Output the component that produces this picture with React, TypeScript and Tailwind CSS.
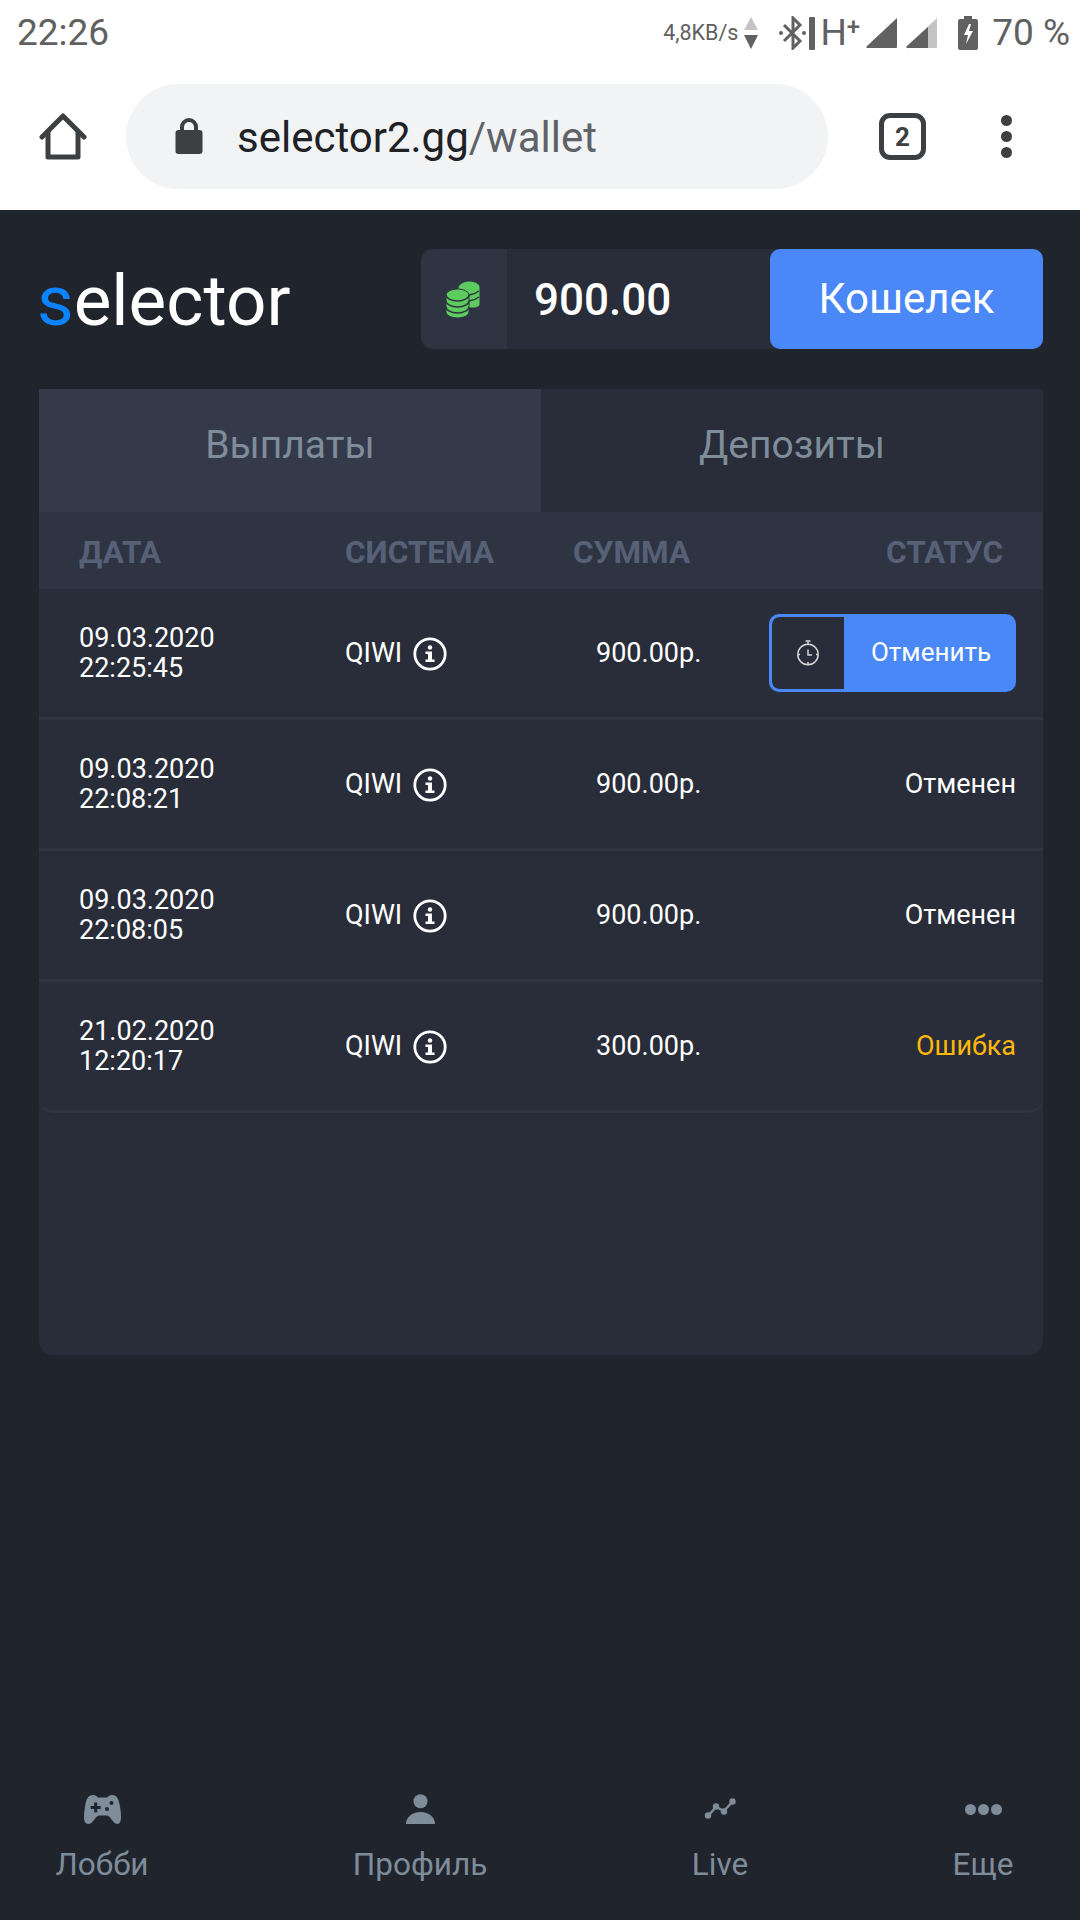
const payouts = [
  { date: "09.03.2020", time: "22:25:45", amount: "900.00р.", status: "pending" },
  { date: "09.03.2020", time: "22:08:21", amount: "900.00р.", status: "Отменен" },
  { date: "09.03.2020", time: "22:08:05", amount: "900.00р.", status: "Отменен" },
  { date: "21.02.2020", time: "12:20:17", amount: "300.00р.", status: "Ошибка" },
];

const StatusBar = () => (
  <div className="flex h-[62px] items-center justify-between pl-[17px] pr-[10px] pt-[3px] text-[#616161]">
    <span className="text-[37px] leading-none">22:26</span>
    <div className="flex items-center">
      <span className="text-[21.500px] leading-none">4,8KB/s</span>
      <svg width="14" height="32" viewBox="0 0 14 32" className="ml-[6px]">
        <path d="M7 0l7 13H0z" fill="#c4c4c4" />
        <path d="M7 32l7-14H0z" fill="#616161" />
      </svg>
      <svg width="36" height="34" viewBox="0 0 36 34" className="ml-[21px]" fill="none">
        <path d="M5 9l16 16-7 7V2l7 7L5 25" stroke="#616161" strokeWidth="3" />
        <circle cx="2" cy="17" r="2" fill="#616161" />
        <circle cx="25" cy="17" r="2" fill="#616161" />
        <rect x="30" y="1" width="6" height="33" rx="1" fill="#616161" />
      </svg>
      <span className="ml-[5px] text-[37px] leading-none">H</span>
      <span className="-mt-[12px] text-[24px] font-medium leading-none">+</span>
      <svg width="32" height="32" viewBox="0 0 32 32" className="ml-[6px]">
        <path d="M31 1v29a1 1 0 0 1-1 1H2a1 1 0 0 1-1-2z" fill="#616161" />
      </svg>
      <svg width="32" height="32" viewBox="0 0 32 32" className="ml-[8px]">
        <path d="M31 1v29a1 1 0 0 1-1 1H2a1 1 0 0 1-1-2z" fill="#c4c4c4" />
        <path d="M22 10v21H2a1 1 0 0 1-1-2z" fill="#616161" />
      </svg>
      <svg width="20" height="34" viewBox="0 0 20 34" className="ml-[20px]">
        <path d="M6 0h8v3h4a2 2 0 0 1 2 2v27a2 2 0 0 1-2 2H2a2 2 0 0 1-2-2V5a2 2 0 0 1 2-2h4z" fill="#616161" />
        <path d="M11 8l-5 11h4l-2 9 7-13h-4l2-7z" fill="#fff" />
      </svg>
      <span className="ml-[14px] text-[37px] leading-none">70 %</span>
    </div>
  </div>
);

const BrowserBar = () => (
  <div className="flex h-[148px] items-start bg-white pt-[22px]">
    <div className="flex h-[105px] w-[126px] items-center justify-center">
      <svg width="48" height="48" viewBox="0 0 48 48" fill="none" stroke="#3c4043" strokeWidth="5" strokeLinejoin="round" strokeLinecap="round" className="mt-[-1px]">
        <path d="M3 25L24 4l21 21" />
        <path d="M9 20v25h30V20" />
      </svg>
    </div>
    <div className="flex h-[105px] w-[702px] items-center rounded-full bg-[#f1f3f4]">
      <svg width="28" height="38" viewBox="0 0 28 38" className="ml-[49px] mt-[-2px]">
        <path d="M7 16v-6a7 7 0 0 1 14 0v6" fill="none" stroke="#3c4043" strokeWidth="4" />
        <rect x="0.5" y="13" width="27" height="24" rx="3" fill="#3c4043" />
      </svg>
      <span className="ml-[34px] mt-[3px] text-[42px] leading-none text-[#202124]">
        selector2.gg<span className="text-[#5f6368]">/wallet</span>
      </span>
    </div>
    <div className="flex h-[105px] flex-1 items-center">
      <div className="ml-[51px] flex h-[47px] w-[47px] items-center justify-center rounded-[11px] border-[5px] border-[#3c4043] text-[26px] font-bold leading-none text-[#3c4043]">
        2
      </div>
      <div className="ml-[75px] flex flex-col gap-[5px]">
        <span className="h-[11px] w-[11px] rounded-full bg-[#3c4043]" />
        <span className="h-[11px] w-[11px] rounded-full bg-[#3c4043]" />
        <span className="h-[11px] w-[11px] rounded-full bg-[#3c4043]" />
      </div>
    </div>
  </div>
);

const Coins = () => (
  <svg width="34" height="38" viewBox="0 0 34 38" fill="#5ecb5e" stroke="#2f3442" strokeWidth="1">
    <g>
      <path d="M12 8c0-3 5-7 11-7s11 3 11 6v17c0 2-3 4-6 4H12z" />
      <path d="M14 14c6 2 14 1 19-3M14 20c6 2 14 1 19-3" fill="none" strokeWidth="1.5" />
    </g>
    <path d="M0 15c0-3 5-6 11.500-6S23 12 23 15v17c0 3-5 6-11.500 6S0 35 0 32z" />
    <path d="M0 15c0 3 5 6 11.500 6S23 18 23 15M0 21c0 3 5 6 11.500 6S23 24 23 21M0 27c0 3 5 6 11.500 6S23 30 23 27" fill="none" strokeWidth="1.500" />
  </svg>
);

const InfoIcon = () => (
  <svg width="34" height="34" viewBox="0 0 34 34" className="mt-[2px]">
    <circle cx="17" cy="17" r="15.200" fill="none" stroke="#fff" strokeWidth="2.800" />
    <circle cx="17" cy="10.500" r="2.200" fill="#fff" />
    <path d="M12.500 14.500h6.500v8h2.500v2.500h-9v-2.500h2.500v-5.500h-2.500z" fill="#fff" />
  </svg>
);

const TimerIcon = () => (
  <svg width="24" height="26" viewBox="0 0 24 26" fill="none" stroke="#d4d4d4" strokeWidth="1.500">
    <circle cx="12" cy="14.500" r="10.200" />
    <path d="M12 1v3M9.500 1h5" />
    <path d="M12 9.500v5.500h4" />
    <path d="M12 22v2.500M2 14.500h2M20 14.500h2" />
  </svg>
);

const GamepadIcon = () => (
  <svg width="37" height="29" viewBox="0 0 37 29" fill="#7f8c9a">
    <path
      fillRule="evenodd"
      d="M9 0c3 0 4 1.500 5 2.500h9C24 1.500 25 0 28 0c5 0 6.500 4 7.500 9 1 5 1.500 9 1.500 13 0 4-1 7-3.500 7-3 0-5-3.500-7-6-1.500-2-3-2.500-4.500-2.500h-6c-1.500 0-3 .5-4.500 2.500-2 2.500-4 6-7 6C1 29 0 26 0 22c0-4 .5-8 1.500-13C2.500 4 4 0 9 0zm1.200 7.500v3.500H6.700v3h3.500v3.500h3V14h3.500v-3h-3.500V7.500zM27.500 6a2 2 0 1 0 0 4 2 2 0 0 0 0-4zm-4.500 6a2 2 0 1 0 0 4 2 2 0 0 0 0-4z"
    />
  </svg>
);

const ProfileIcon = () => (
  <svg width="29" height="30" viewBox="0 0 29 30" fill="#7f8c9a">
    <circle cx="14.500" cy="7.300" r="7" />
    <path d="M0 30c0-7 6-12 14.500-12S29 23 29 30z" />
  </svg>
);

const LiveIcon = () => (
  <svg width="33" height="22" viewBox="0 0 33 22" fill="#7f8c9a" stroke="#7f8c9a" strokeWidth="0">
    <path d="M4 18L12 9l8 4 9-10" fill="none" strokeWidth="2.500" />
    <circle cx="4" cy="17.500" r="3.200" />
    <circle cx="12" cy="8.500" r="3.200" />
    <circle cx="20" cy="13.500" r="3.200" />
    <circle cx="28.500" cy="3.500" r="3.200" />
  </svg>
);

const DotsIcon = () => (
  <div className="flex gap-[2px]">
    <span className="h-[11px] w-[11px] rounded-full bg-[#7f8c9a]" />
    <span className="h-[11px] w-[11px] rounded-full bg-[#7f8c9a]" />
    <span className="h-[11px] w-[11px] rounded-full bg-[#7f8c9a]" />
  </div>
);

const Status = ({ status }: { status: string }) => {
  if (status === "pending") {
    return (
      <div className="flex h-[78px] w-[247px] overflow-hidden rounded-[10px] border-[3px] border-[#4a88f7] bg-[#4a88f7]">
        <div className="flex w-[72px] items-center justify-center rounded-l-[7px] bg-[#282d39]">
          <TimerIcon />
        </div>
        <div className="flex flex-1 items-center justify-center pb-[2px] pl-[5px] text-[26px] text-white">Отменить</div>
      </div>
    );
  }
  return <span className={status === "Ошибка" ? "text-[#ffb80a]" : "text-white"}>{status}</span>;
};

const NavItem = ({ label, className, children }: { label: string; className: string; children: React.ReactNode }) => (
  <div className={`flex w-[130px] shrink-0 flex-col items-center ${className}`}>
    <div className="flex h-[30px] items-center">{children}</div>
    <span className="mt-[21px] text-[31.500px] leading-[40px] text-[#7f8c9a]">{label}</span>
  </div>
);

export default function App() {
  return (
    <div className="flex h-[1920px] w-[1080px] flex-col overflow-hidden bg-[#20242d] font-['Roboto',sans-serif]">
      <div className="bg-white">
        <StatusBar />
        <BrowserBar />
      </div>

      <div className="flex flex-1 flex-col pl-[39px] pr-[37px]">
        <div className="mt-[39px] flex h-[100px] items-center justify-between">
          <div className="ml-[-2px] mt-[2px] text-[71px] leading-none text-white">
            <span className="text-[#0d84ff]">s</span>elector
          </div>
          <div className="flex h-[100px] w-[622px] rounded-[10px] bg-[#282d39]">
            <div className="flex w-[86px] items-center justify-center rounded-l-[14px] bg-[#2f3442] pr-[2px]">
              <Coins />
            </div>
            <div className="flex-1 pl-[27px] text-[44px] font-medium leading-[102px] text-white">900.00</div>
            <div className="flex w-[273px] items-center justify-center rounded-[10px] bg-[#4a88f7] pb-[1px] text-[42px] text-white">
              Кошелек
            </div>
          </div>
        </div>

        <div className="mt-[40px] h-[966px] rounded-b-[14px] bg-[#282d39]">
          <div className="flex h-[123px] text-[39px] text-[#7f8c9a]">
            <div className="flex w-1/2 items-center justify-center bg-[#343a49] pb-[10px]">Выплаты</div>
            <div className="flex w-1/2 items-center justify-center pb-[10px]">Депозиты</div>
          </div>
          <div className="flex h-[77px] items-center bg-[#2f3442] pl-[40px] pr-[40px] pt-[4px] text-[31.500px] font-bold text-[#566178]">
            <div className="w-[266px]">ДАТА</div>
            <div className="w-[228px]">СИСТЕМА</div>
            <div>СУММА</div>
            <div className="flex-1 text-right">СТАТУС</div>
          </div>
          <div className="rounded-b-[14px]">
            {payouts.map((row) => (
              <div
                key={row.time}
                className="flex h-[131px] items-center border-b-[3px] border-[#2f3442] pl-[40px] pr-[27px] text-[27px] text-white last:rounded-b-[14px]"
              >
                <div className="w-[266px] text-[27px] leading-[30px]">
                  <div>{row.date}</div>
                  <div>{row.time}</div>
                </div>
                <div className="flex w-[251px] items-center gap-[11px]">
                  <span>QIWI</span>
                  <InfoIcon />
                </div>
                <div>{row.amount}</div>
                <div className="flex flex-1 justify-end">
                  <Status status={row.status} />
                </div>
              </div>
            ))}
          </div>
        </div>

        <div className="mt-auto flex h-[142px] items-start pt-[16px]">
          <NavItem label="Лобби" className="ml-[-2px]"><GamepadIcon /></NavItem>
          <NavItem label="Профиль" className="ml-[188px]"><ProfileIcon /></NavItem>
          <NavItem label="Live" className="ml-[170px]"><LiveIcon /></NavItem>
          <NavItem label="Еще" className="ml-[133px]"><DotsIcon /></NavItem>
        </div>
      </div>
    </div>
  );
}
